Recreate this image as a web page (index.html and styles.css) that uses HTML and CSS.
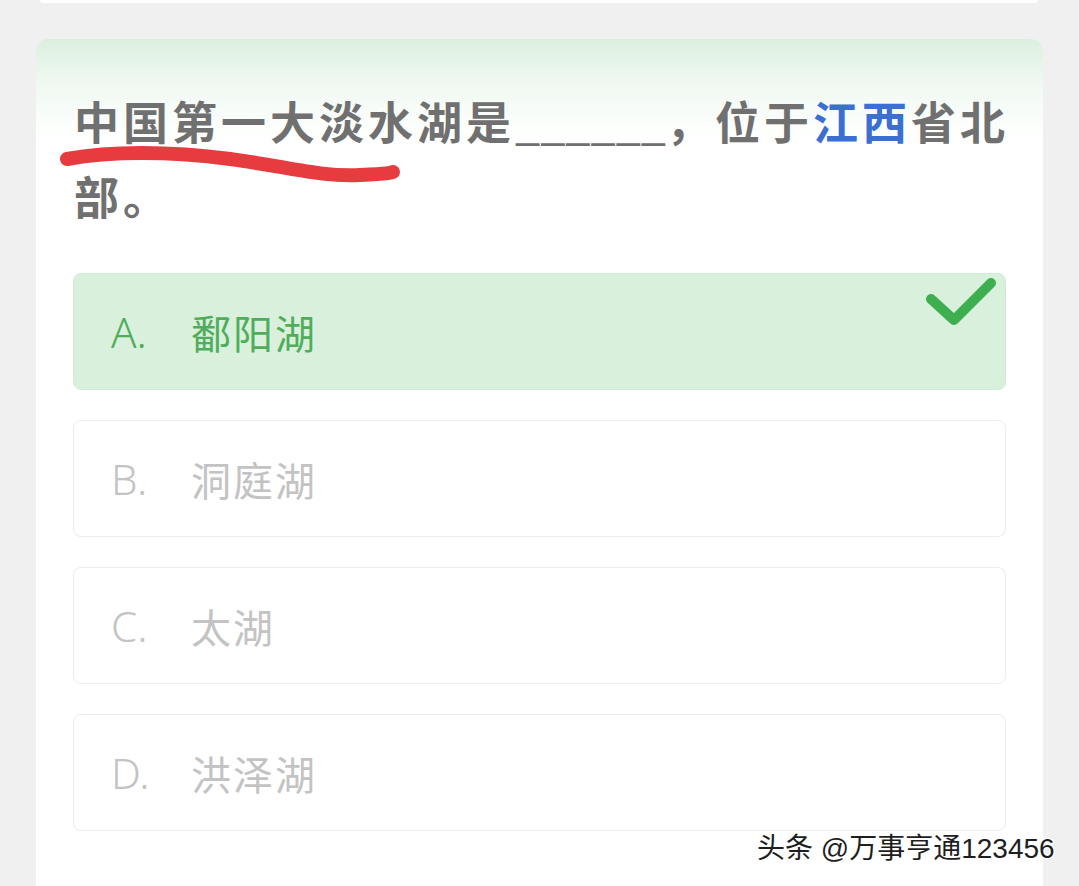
FILE: index.html
```html
<!DOCTYPE html>
<html lang="zh-CN">
<head>
<meta charset="utf-8">
<link rel="stylesheet" href="styles.css">
</head>
<body>
<div class="page">
  <div class="prev-card"></div>
  <div class="card">
    <div class="question">中国第一大淡水湖是<span class="blank">______</span>，位于<span class="hl">江西</span>省北部。</div>
    <div class="options">
      <div class="option correct">
        <span class="letter">A.</span><span class="text">鄱阳湖</span>
        <svg class="check" width="80" height="60" viewBox="0 0 80 60"><polyline points="10,23 33,44 70,7" fill="none" stroke="#3daf4f" stroke-width="10" stroke-linecap="round" stroke-linejoin="round"/></svg>
      </div>
      <div class="option">
        <span class="letter">B.</span><span class="text">洞庭湖</span>
      </div>
      <div class="option">
        <span class="letter">C.</span><span class="text">太湖</span>
      </div>
      <div class="option">
        <span class="letter">D.</span><span class="text">洪泽湖</span>
      </div>
    </div>
  </div>
  <svg class="scribble" width="1079" height="886" viewBox="0 0 1079 886"><path d="M67 159 C 110 151, 170 151, 230 159 S 320 177, 360 175 S 390 172, 393 172" fill="none" stroke="#e63c40" stroke-width="14" stroke-linecap="round"/></svg>
  <div class="watermark">头条 @万事亨通123456</div>
</div>
</body>
</html>
```

FILE: styles.css
```css
html, body {
  margin: 0;
  padding: 0;
  background: #f0f0f0;
  font-family: "Noto Sans CJK SC", "Noto Sans", sans-serif;
}

.page {
  position: relative;
  width: 1079px;
  height: 886px;
  overflow: hidden;
}

.prev-card {
  margin-left: 40px;
  width: 998px;
  height: 3px;
  background: #ffffff;
  border-radius: 0 0 4px 4px;
}

.card {
  margin-top: 36px;
  margin-left: 36px;
  width: 1007px;
  box-sizing: border-box;
  padding: 44px 37px 80px 37px;
  border-radius: 12px 12px 0 0;
  background: linear-gradient(180deg, #dcefdf 0px, #eef8f0 40px, #fdfffd 90px, #ffffff 120px);
}

.question {
  font-size: 45px;
  font-weight: 700;
  letter-spacing: 4px;
  line-height: 75px;
  color: #707070;
  padding-left: 1px;
  margin-right: -16px;
}

.question .hl {
  color: #3b6fd1;
}

.question .blank {
  letter-spacing: 0;
  font-weight: 400;
  color: #707070;
}

.options {
  margin-top: 40px;
  display: flex;
  flex-direction: column;
  gap: 30px;
}

.option {
  position: relative;
  height: 117px;
  box-sizing: border-box;
  border: 1px solid #ececec;
  border-radius: 8px;
  background: #ffffff;
  display: flex;
  align-items: center;
  padding-left: 37px;
  color: #c3c3c3;
  font-size: 40px;
}

.option .letter {
  width: 80px;
  font-family: "Noto Sans", "Open Sans", sans-serif;
  font-size: 42px;
  font-weight: 300;
}

.option .text {
  font-size: 40px;
  letter-spacing: 2px;
}

.option.correct {
  background: #d8f0dc;
  border-color: #d2ead6;
  color: #4fad5b;
}

.check {
  position: absolute;
  right: 4px;
  top: 2px;
}

.scribble {
  position: absolute;
  left: 0;
  top: 0;
  pointer-events: none;
}

.watermark {
  position: absolute;
  left: 757px;
  top: 826px;
  font-family: "Liberation Sans", "Noto Sans CJK SC", sans-serif;
  font-size: 28px;
  color: #1e1e1e;
  text-shadow: 1px 1px 0 #fff, -1px -1px 0 #fff, 1px -1px 0 #fff, -1px 1px 0 #fff, 0 0 3px #fff;
}
```
